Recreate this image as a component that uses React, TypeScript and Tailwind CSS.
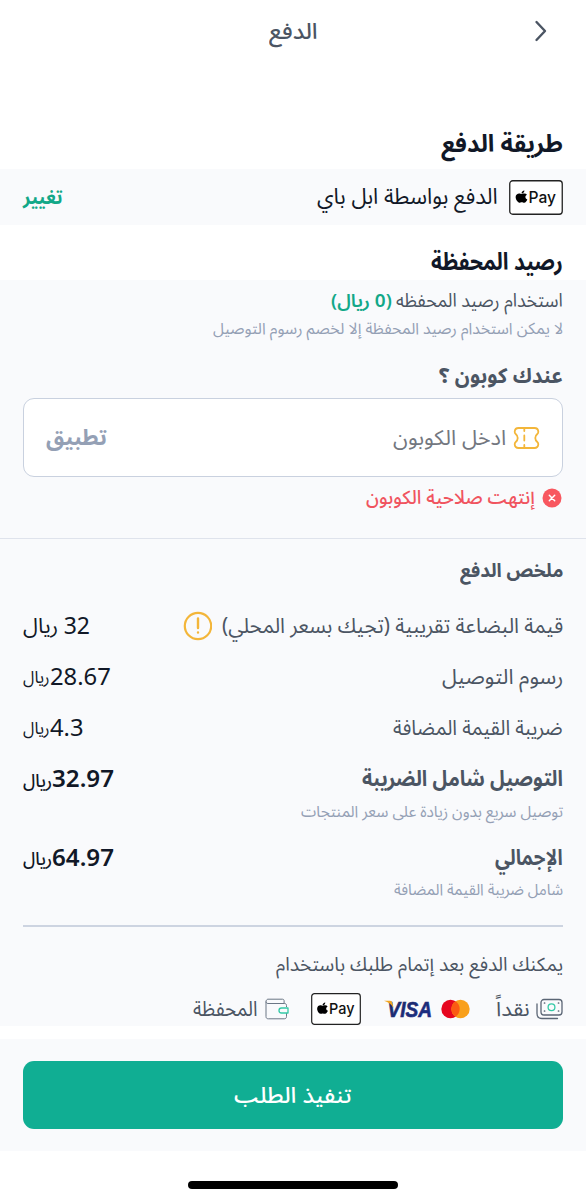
import { useLayoutEffect, useRef, type ReactNode } from "react";

/* One line of text, condensed or expanded horizontally to fill its column. */
function Line({ className, children, ltr }: { className: string; children: ReactNode; ltr?: boolean }) {
  const box = useRef<HTMLSpanElement>(null);
  const text = useRef<HTMLSpanElement>(null);
  useLayoutEffect(() => {
    if (box.current && text.current) {
      const ratio = box.current.clientWidth / text.current.offsetWidth;
      text.current.style.transform = `scaleX(${ratio})`;
    }
  }, []);
  return (
    <span ref={box} className={`flex shrink-0 justify-start whitespace-nowrap ${className}`}>
      <span ref={text} dir={ltr ? "ltr" : "rtl"} className="block shrink-0 origin-right">
        {children}
      </span>
    </span>
  );
}

function ApplePay({ className }: { className: string }) {
  return (
    <svg viewBox="0 0 54 35" preserveAspectRatio="none" direction="ltr" className={`shrink-0 ${className}`}>
      <rect x="0.75" y="0.75" width="52.5" height="33.5" rx="3" fill="#fff" stroke="#222" strokeWidth="1.3" />
      <g transform="translate(6.5 9.6) scale(0.0311 0.0275)">
        <path d="M318.7 268.7c-.2-36.7 16.4-64.4 50-84.8-18.8-26.9-47.2-41.7-84.7-44.6-35.5-2.8-74.3 20.7-88.5 20.7-15 0-49.4-19.7-76.4-19.7C63.3 141.2 4 184.8 4 273.5q0 39.300 14.400 81.200c12.800 36.700 59 126.700 107.200 125.200 25.200-.6 43-17.900 75.800-17.900 31.800 0 48.300 17.900 76.400 17.900 48.600-.7 90.400-82.500 102.600-119.300-65.200-30.700-61.700-90-61.700-91.900zm-56.600-164.200c27.300-32.400 24.800-61.900 24-72.500-24.100 1.400-52 16.400-67.900 34.900-17.500 19.800-27.800 44.300-25.600 71.900 26.100 2 49.900-11.400 69.500-34.300z" />
      </g>
      <text x="19.500" y="22.800" fontSize="16.500" fontWeight="500" fontFamily="Inter, 'Liberation Sans', sans-serif" textLength="27.500" lengthAdjust="spacingAndGlyphs" fill="#111">Pay</text>
    </svg>
  );
}

function TicketIcon() {
  return (
    <svg viewBox="0 0 27 24" className="h-[24px] w-[27px] shrink-0" fill="none" stroke="#f3b63a" strokeWidth="1.800" strokeLinecap="round" strokeLinejoin="round">
      <path d="M5.500 2h16c2.300 0 3.600 1.300 3.800 3.600.1 1.200-.2 1.700-1 2.400-2.700 2.300-2.700 5.700 0 8 .8.700 1.100 1.200 1 2.400-.2 2.300-1.500 3.600-3.800 3.600h-16c-2.300 0-3.600-1.300-3.800-3.600-.1-1.200.2-1.700 1-2.400 2.700-2.300 2.700-5.700 0-8-.8-.7-1.100-1.200-1-2.400C1.900 3.300 3.200 2 5.500 2z" />
      <path d="M11.300 2v3M11.300 9.500v5M11.300 19v3" />
    </svg>
  );
}

function MoneyIcon() {
  return (
    <svg viewBox="0 0 27 22" className="h-[22px] w-[27px] shrink-0" fill="none" stroke="#5b6675" strokeWidth="1.300" strokeLinecap="round">
      <rect x="5" y="1.500" width="21" height="15.500" rx="3" />
      <path d="M1 6v9.500C1 18.500 3 20.500 6 20.500h15.500" />
      <circle cx="15.500" cy="9.200" r="3.400" stroke="#34c9a6" />
      <path d="M8.500 5h.1M8.500 13h.1M22.500 5h.1M22.500 13h.1" strokeWidth="1.700" />
    </svg>
  );
}

function WalletIcon() {
  return (
    <svg viewBox="0 0 24 22" className="h-[22px] w-[24px] shrink-0" fill="none" stroke="#6b7685" strokeWidth="1" strokeLinejoin="round">
      <path d="M21.500 9V7.500c0-1.300-.7-2-2-2H3C1.600 5.500 1 4.500 1 3.500S1.800 1.200 3 1.200h14.500c1 0 1.600.6 1.600 1.600v2.700M1 3.500v15c0 1.500.8 2.300 2.300 2.300h16c1.400 0 2.200-.8 2.200-2.200V15" />
      <path d="M23 10h-6.500a2.500 2.500 0 0 0 0 5H23z" stroke="#34c9a6" strokeWidth="1.300" />
    </svg>
  );
}

function Cards() {
  return (
    <svg viewBox="0 0 88 32" direction="ltr" className="h-[32px] w-[88px] shrink-0">
      <defs>
        <linearGradient id="visa" x1="0" y1="0" x2="1" y2="1">
          <stop offset="0" stopColor="#1b2a63" />
          <stop offset="1" stopColor="#1c2d8a" />
        </linearGradient>
      </defs>
      <text x="3.500" y="23.800" fontSize="21.500" fontWeight="700" fontStyle="italic" fontFamily="'Liberation Sans', sans-serif" textLength="44.500" lengthAdjust="spacingAndGlyphs" fill="url(#visa)" stroke="url(#visa)" strokeWidth="0.600">VISA</text>
      <path d="M0 7.800h6c1.300 0 2 .7 2.300 2l1.200 5.200C7.500 11.500 4.500 9 0 7.800z" fill="#f2a51f" />
      <circle cx="66.500" cy="16" r="9.200" fill="#e6061f" />
      <circle cx="76.500" cy="16" r="9.200" fill="#f9a01b" />
      <path d="M71.500 8.300a9.200 9.200 0 0 1 0 15.400a9.200 9.200 0 0 1 0-15.400z" fill="#fb5a12" />
    </svg>
  );
}

function Amount({ value, bold, numClass, unitClass }: { value: string; bold?: boolean; numClass: string; unitClass: string }) {
  return (
    <div className={`flex items-center text-[#111827] ${bold ? "font-semibold" : ""}`}>
      <Line ltr className={`font-['Noto_Sans'] text-[23px] ${numClass}`}>{value}</Line>
      <Line className={`pt-[4px] ${bold ? "font-medium" : ""} ${unitClass}`}>ريال</Line>
    </div>
  );
}

export default function App() {
  return (
    <main dir="rtl" className="flex h-[1200px] w-[586px] flex-col overflow-hidden bg-white font-['Noto_Sans_Arabic','DejaVu_Sans',sans-serif] leading-none text-[#4b5563]">
      <header className="grid h-[62px] shrink-0 grid-cols-3 items-center px-[38px]">
        <svg viewBox="0 0 14 22" className="h-[22px] w-[14px]" fill="none" stroke="#4b5563" strokeWidth="2.400" strokeLinecap="round" strokeLinejoin="round">
          <path d="M2.500 2l8.500 9L2.500 20" />
        </svg>
        <div className="flex justify-center pt-[1px]">
          <Line className="w-[49px] text-[22px] font-medium">الدفع</Line>
        </div>
      </header>

      <h2 className="flex h-[107px] shrink-0 items-end px-[23px] pb-[12px] text-[#111827]">
        <Line className="w-[122px] text-[24px] font-bold">طريقة الدفع</Line>
      </h2>
      <section className="flex h-[56px] shrink-0 items-center justify-between bg-[#f9fafc] px-[23px]">
        <div className="flex items-center gap-[11px]">
          <ApplePay className="h-[35px] w-[54px]" />
          <Line className="w-[181px] text-[22px] text-[#111827]">الدفع بواسطة ابل باي</Line>
        </div>
        <Line className="w-[40px] pt-[2px] text-[20px] font-bold text-[#12a888]">تغيير</Line>
      </section>

      <h2 className="flex h-[55px] shrink-0 items-end px-[23px] pb-[5px] text-[#111827]">
        <Line className="w-[132px] text-[24px] font-bold">رصيد المحفظة</Line>
      </h2>

      <section className="flex h-[259px] shrink-0 flex-col border-b border-[#dfe3ec] bg-[#f9fafc] px-[23px] pt-[7px]">
        <div className="flex h-[28px] items-center gap-[4px]">
          <Line className="w-[167px] text-[19px]">استخدام رصيد المحفظه</Line>
          <Line className="w-[61px] text-[18px] font-semibold text-[#12a888]">(0 ريال)</Line>
        </div>
        <div className="flex h-[28px] items-center">
          <Line className="w-[350px] text-[16px] text-[#94a0b5]">لا يمكن استخدام رصيد المحفظة إلا لخصم رسوم التوصيل</Line>
        </div>
        <div className="mt-[16px] flex h-[34px] items-center">
          <Line className="w-[124px] text-[21px] font-bold">عندك كوبون ؟</Line>
        </div>
        <div className="mt-[5px] flex h-[79px] shrink-0 items-center justify-between rounded-[11px] border border-[#c9d1df] bg-white px-[22px]">
          <div className="flex items-center gap-[7px]">
            <TicketIcon />
            <Line className="w-[113px] pt-[2px] text-[21px] text-[#73777f]">ادخل الكوبون</Line>
          </div>
          <Line className="w-[61px] text-[22px] font-bold text-[#94a0b5]">تطبيق</Line>
        </div>
        <div className="mt-[6px] flex h-[30px] items-center gap-[7px] pr-[1px]">
          <svg viewBox="0 0 20 20" className="size-[20px] shrink-0">
            <circle cx="10" cy="10" r="9.500" fill="#f8575f" />
            <path d="M7.300 7.300l5.400 5.400M12.700 7.300l-5.400 5.400" stroke="#fff" strokeWidth="1.500" strokeLinecap="round" />
          </svg>
          <Line className="w-[169px] text-[19px] font-medium text-[#f0545f]">إنتهت صلاحية الكوبون</Line>
        </div>
      </section>

      <section className="flex h-[487px] shrink-0 flex-col bg-[#f9fafc] px-[23px] pt-[17px]">
        <h3 className="flex h-[32px] items-center">
          <Line className="w-[103px] text-[19px] font-bold">ملخص الدفع</Line>
        </h3>
        <div className="mt-[13px] flex h-[51px] items-center justify-between">
          <div className="flex items-center gap-[10px]">
            <Line className="w-[341px] pt-[1px] text-[21px]">قيمة البضاعة تقريبية (تجيك بسعر المحلي)</Line>
            <svg viewBox="0 0 30 30" className="size-[30px] shrink-0" fill="none" stroke="#f3b63a" strokeLinecap="round">
              <circle cx="16" cy="15" r="13.200" strokeWidth="2.200" />
              <path d="M16 7.500v9.500M16 21.500v.1" strokeWidth="2.400" />
            </svg>
          </div>
          <div className="flex items-center gap-[6px] text-[#111827]">
            <Line ltr className="w-[26px] font-['Noto_Sans'] text-[23px]">32</Line>
            <Line className="w-[35px] pt-[1px] text-[21px]">ريال</Line>
          </div>
        </div>
        <div className="flex h-[51px] items-center justify-between">
          <Line className="w-[121px] pt-[2px] text-[21px]">رسوم التوصيل</Line>
          <Amount value="28.67" numClass="w-[61px]" unitClass="w-[27px] text-[17px]" />
        </div>
        <div className="flex h-[52px] items-center justify-between">
          <Line className="w-[170px] pt-[2px] text-[21px]">ضريبة القيمة المضافة</Line>
          <Amount value="4.3" numClass="w-[33px]" unitClass="w-[27px] text-[17px]" />
        </div>
        <div className="flex h-[51px] items-center justify-between">
          <Line className="w-[201px] pt-[1px] text-[22px] font-bold">التوصيل شامل الضريبة</Line>
          <Amount bold value="32.97" numClass="w-[62px]" unitClass="w-[29px] text-[18px]" />
        </div>
        <div className="flex h-[16px] items-center">
          <Line className="w-[262px] text-[16px] text-[#94a0b5]">توصيل سريع بدون زيادة على سعر المنتجات</Line>
        </div>
        <div className="mt-[12px] flex h-[51px] items-center justify-between">
          <Line className="w-[68px] pt-[2px] text-[22px] font-bold">الإجمالي</Line>
          <Amount bold value="64.97" numClass="w-[62px]" unitClass="w-[29px] text-[18px]" />
        </div>
        <div className="flex h-[16px] items-center">
          <Line className="w-[169px] text-[16px] text-[#94a0b5]">شامل ضريبة القيمة المضافة</Line>
        </div>
        <div className="mt-[27px] h-[2px] shrink-0 bg-[#cdd4e1]" />
        <div className="mt-[22px] flex h-[32px] items-center">
          <Line className="w-[287px] text-[19px]">يمكنك الدفع بعد إتمام طلبك باستخدام</Line>
        </div>
        <div className="mt-[11px] flex h-[34px] shrink-0 items-center">
          <MoneyIcon />
          <Line className="mr-[6px] w-[34px] pt-[2px] text-[20px]">نقداً</Line>
          <div className="mr-[24px] flex"><Cards /></div>
          <ApplePay className="mr-[23px] h-[32px] w-[50px]" />
          <div className="mr-[22px] flex"><WalletIcon /></div>
          <Line className="mr-[8px] w-[64px] pt-[2px] text-[21px]">المحفظة</Line>
        </div>
      </section>

      <footer className="mt-[13px] flex h-[112px] shrink-0 items-center bg-[#f9fafc] px-[23px]">
        <button className="flex h-[68px] w-full items-center justify-center rounded-[11px] bg-[#10ae93] text-white">
          <Line className="w-[118px] pt-[2px] text-[22px] font-medium">تنفيذ الطلب</Line>
        </button>
      </footer>
      <div className="mt-[30px] flex shrink-0 justify-center">
        <div className="h-[8px] w-[210px] rounded-full bg-black" />
      </div>
    </main>
  );
}
